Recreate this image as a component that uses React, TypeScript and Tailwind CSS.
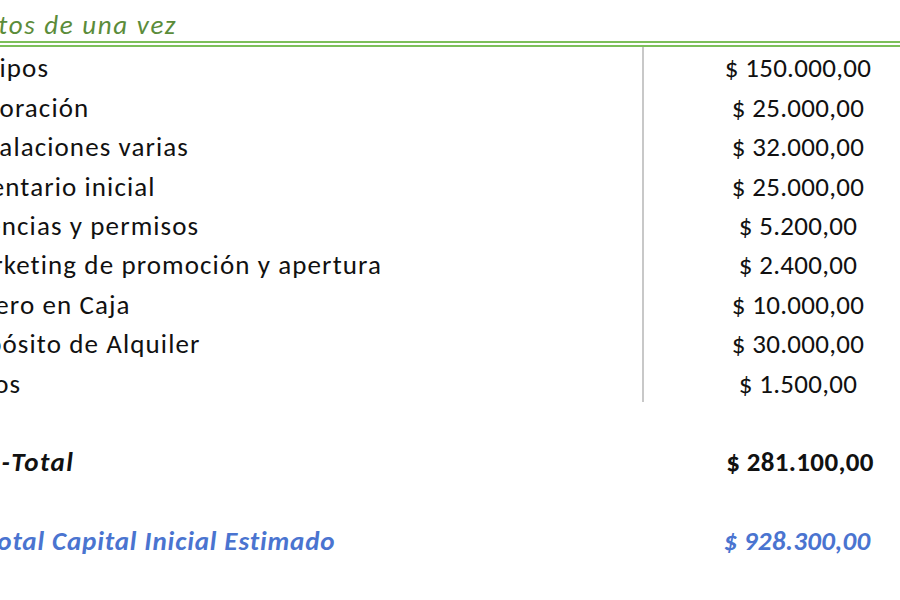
import React from "react";

const rows: [string, string][] = [
  ["Equipos", "$ 150.000,00"],
  ["Decoración", "$ 25.000,00"],
  ["Instalaciones varias", "$ 32.000,00"],
  ["Inventario inicial", "$ 25.000,00"],
  ["Licencias y permisos", "$ 5.200,00"],
  ["Marketing de promoción y apertura", "$ 2.400,00"],
  ["Dinero en Caja", "$ 10.000,00"],
  ["Depósito de Alquiler", "$ 30.000,00"],
  ["Otros", "$ 1.500,00"],
];

export default function App() {
  return (
    <div
      className="w-[900px] h-[600px] overflow-hidden bg-white text-[#111] flex flex-col text-[27px] leading-[33px]"
      style={{ fontFamily: "Carlito, Calibri, 'Open Sans', sans-serif" }}
    >
      <div className="h-[41px] flex items-end shrink-0">
        <div className="-ml-[48px] whitespace-nowrap italic tracking-[1.7px] text-[#5b8c3a]">Gastos de una vez</div>
      </div>
      <div className="h-[6px] shrink-0 border-b-[6px] border-double border-[#7cbf5a]" />
      <div className="flex shrink-0">
        <div className="w-[644px] border-r-[2px] border-[#c8c8c8] overflow-hidden shrink-0">
          {rows.map(([label]) => (
            <div key={label} className="h-[39.4px] flex items-end pb-[2px]">
              <div className="-ml-[45px] whitespace-nowrap tracking-[1.1px]">{label}</div>
            </div>
          ))}
        </div>
        <div className="w-[312px] shrink-0 -ml-[2px]">
          {rows.map(([label, amount]) => (
            <div key={label} className="h-[39.4px] flex items-end justify-center pb-[2px] whitespace-nowrap tracking-[0.3px]">
              {amount}
            </div>
          ))}
        </div>
      </div>
      <div className="h-[39.4px] shrink-0" />
      <div className="h-[39.4px] flex items-end pb-[2px] shrink-0 font-bold">
        <div className="w-[644px] shrink-0">
          <div className="-ml-[44px] whitespace-nowrap italic tracking-[1.5px]">Sub-Total</div>
        </div>
        <div className="w-[312px] shrink-0 flex justify-center whitespace-nowrap tracking-[0.35px]">$ 281.100,00</div>
      </div>
      <div className="h-[39.4px] shrink-0" />
      <div className="h-[39.4px] flex items-end pb-[2px] shrink-0 font-bold italic text-[#4a74d0]">
        <div className="w-[644px] shrink-0">
          <div className="-ml-[15px] whitespace-nowrap tracking-[0.9px]">Total Capital Inicial Estimado</div>
        </div>
        <div className="w-[306px] shrink-0 flex justify-center whitespace-nowrap tracking-[0.3px]">$ 928.300,00</div>
      </div>
    </div>
  );
}
